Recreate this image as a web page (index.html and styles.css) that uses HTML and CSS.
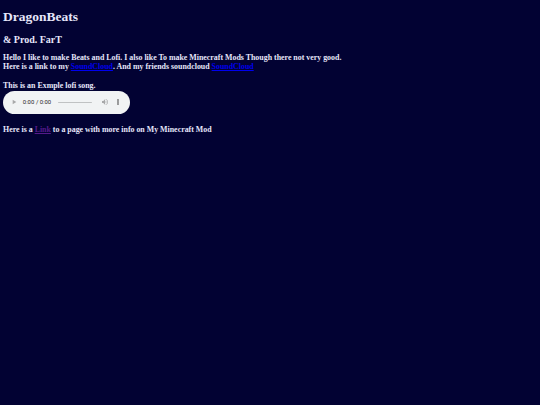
FILE: index.html
```html
<!DOCTYPE html>
<html>
<head>
<meta charset="utf-8">
<title>DragonBeats</title>
<link rel="stylesheet" href="styles.css">
</head>
<body class="page">
<h1 class="title">DragonBeats</h1>
<h2 class="subtitle">&amp; Prod. FarT</h2>
<p class="text intro">Hello I like to make Beats and Lofi. I also like To make Minecraft Mods Though there not very good.<br>Here is a link to my <a class="link" href="#sc1">SoundCloud</a>. And my friends soundcloud <a class="link" href="#sc2">SoundCloud</a></p>
<p class="text song">This is an Exmple lofi song.</p>
<audio class="player" controls></audio>
<p class="text more">Here is a <a class="link visited" href="#mod">Link</a> to a page with more info on My Minecraft Mod</p>
</body>
</html>
```

FILE: styles.css
```css
html {
  background: #020233;
}
.page {
  margin: 0 3px;
  padding-top: 1px;
  background: #020233;
  color: #e6e6fa;
  font-family: "Liberation Serif", "Times New Roman", serif;
  font-weight: bold;
}
.title {
  font-size: 13.5px;
  line-height: 15.5px;
  margin: 8px 0 9px;
}
.subtitle {
  font-size: 10px;
  line-height: 11.5px;
  margin: 0 0 8px;
}
.text {
  font-size: 7.9px;
  line-height: 9.2px;
  margin: 0;
}
.song {
  margin-top: 9.6px;
}
.player {
  display: block;
  width: 300px;
  height: 54px;
  zoom: 0.421875;
  margin-top: 2.4px;
}
.more {
  margin-top: 11.4px;
}
.link {
  color: #0000ee;
}
.link.visited {
  color: #551a8b;
}
```
